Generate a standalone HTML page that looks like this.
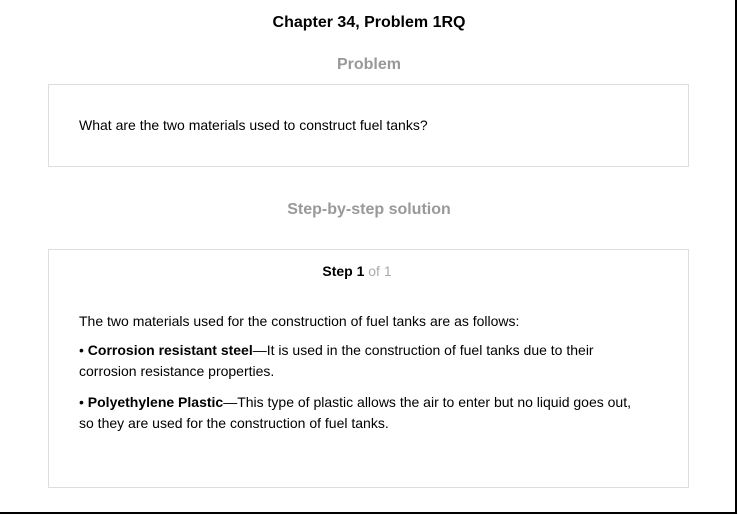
<!DOCTYPE html>
<html><head><style>
body{margin:0;width:738px;height:515px;background:#fff;font-family:"Liberation Sans",Arial,sans-serif;color:#000;position:relative;overflow:hidden}
.frame{position:absolute;left:0;top:0;width:735px;height:512px;border-right:2px solid #000;border-bottom:2px solid #000}
.t{position:absolute;left:0;width:738px;text-align:center;font-weight:bold}
.box{position:absolute;left:48px;width:639px;border:1px solid #ddd}
p{margin:0;font-size:14px;line-height:21px;position:absolute;left:79px;width:570px}
</style></head><body>
<div class="frame"></div>
<div class="t" style="top:14px;font-size:16px">Chapter 34, Problem 1RQ</div>
<div class="t" style="top:56px;font-size:16px;color:#999">Problem</div>
<div class="box" style="top:84px;height:81px"></div>
<p style="top:115px">What are the two materials used to construct fuel tanks?</p>
<div class="t" style="top:201px;font-size:16px;color:#999">Step-by-step solution</div>
<div class="box" style="top:249px;height:237px"></div>
<div class="t" style="top:263px;font-size:14px;left:-12px">Step 1 <span style="font-weight:normal;color:#aaa">of 1</span></div>
<p style="top:311px">The two materials used for the construction of fuel tanks are as follows:</p>
<p style="top:340px">• <b>Corrosion resistant steel</b>—It is used in the construction of fuel tanks due to their corrosion resistance properties.</p>
<p style="top:392px">• <b>Polyethylene Plastic</b>—This type of plastic allows the air to enter but no liquid goes out, so they are used for the construction of fuel tanks.</p>
</body></html>
